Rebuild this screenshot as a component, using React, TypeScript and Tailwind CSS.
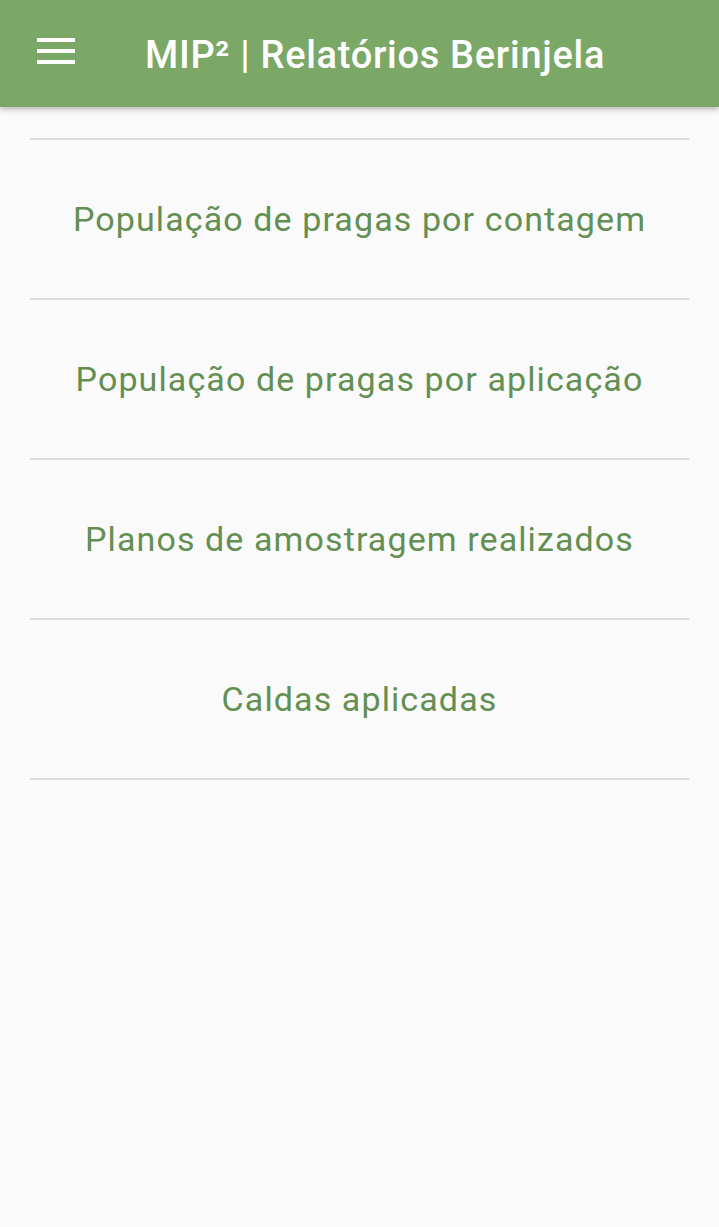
import React from "react";

const items = [
  "População de pragas por contagem",
  "População de pragas por aplicação",
  "Planos de amostragem realizados",
  "Caldas aplicadas",
];

const MenuIcon = () => (
  <svg width="38" height="26" viewBox="0 0 38 26" className="block">
    <rect x="0" y="0" width="38" height="4" fill="#ffffff" />
    <rect x="0" y="11" width="38" height="4" fill="#ffffff" />
    <rect x="0" y="22" width="38" height="4" fill="#ffffff" />
  </svg>
);

export default function App() {
  return (
    <div className="min-h-[1227px] bg-[#fafafa] font-['Roboto',sans-serif]">
      {/* Toolbar */}
      <header className="relative z-10 flex h-[107px] items-center bg-[#7ba867] shadow-[0_2px_6px_rgba(0,0,0,0.3)]">
        <button className="ml-[37px] mb-[5px] flex items-center">
          <MenuIcon />
        </button>
        <h1 className="ml-[70px] mt-[3px] text-[38px] font-medium tracking-[0.7px] text-white">
          MIP² | Relatórios Berinjela
        </h1>
      </header>

      {/* Report list */}
      <div className="mx-[30px] mt-[31px]">
        <div className="h-[2px] bg-[#dcdcdc]" />
        {items.map((item) => (
          <div key={item}>
            <div className="flex h-[158px] items-center justify-center text-[34px] tracking-[1.1px] text-[#638f53]">
              {item}
            </div>
            <div className="h-[2px] bg-[#dcdcdc]" />
          </div>
        ))}
      </div>
    </div>
  );
}
